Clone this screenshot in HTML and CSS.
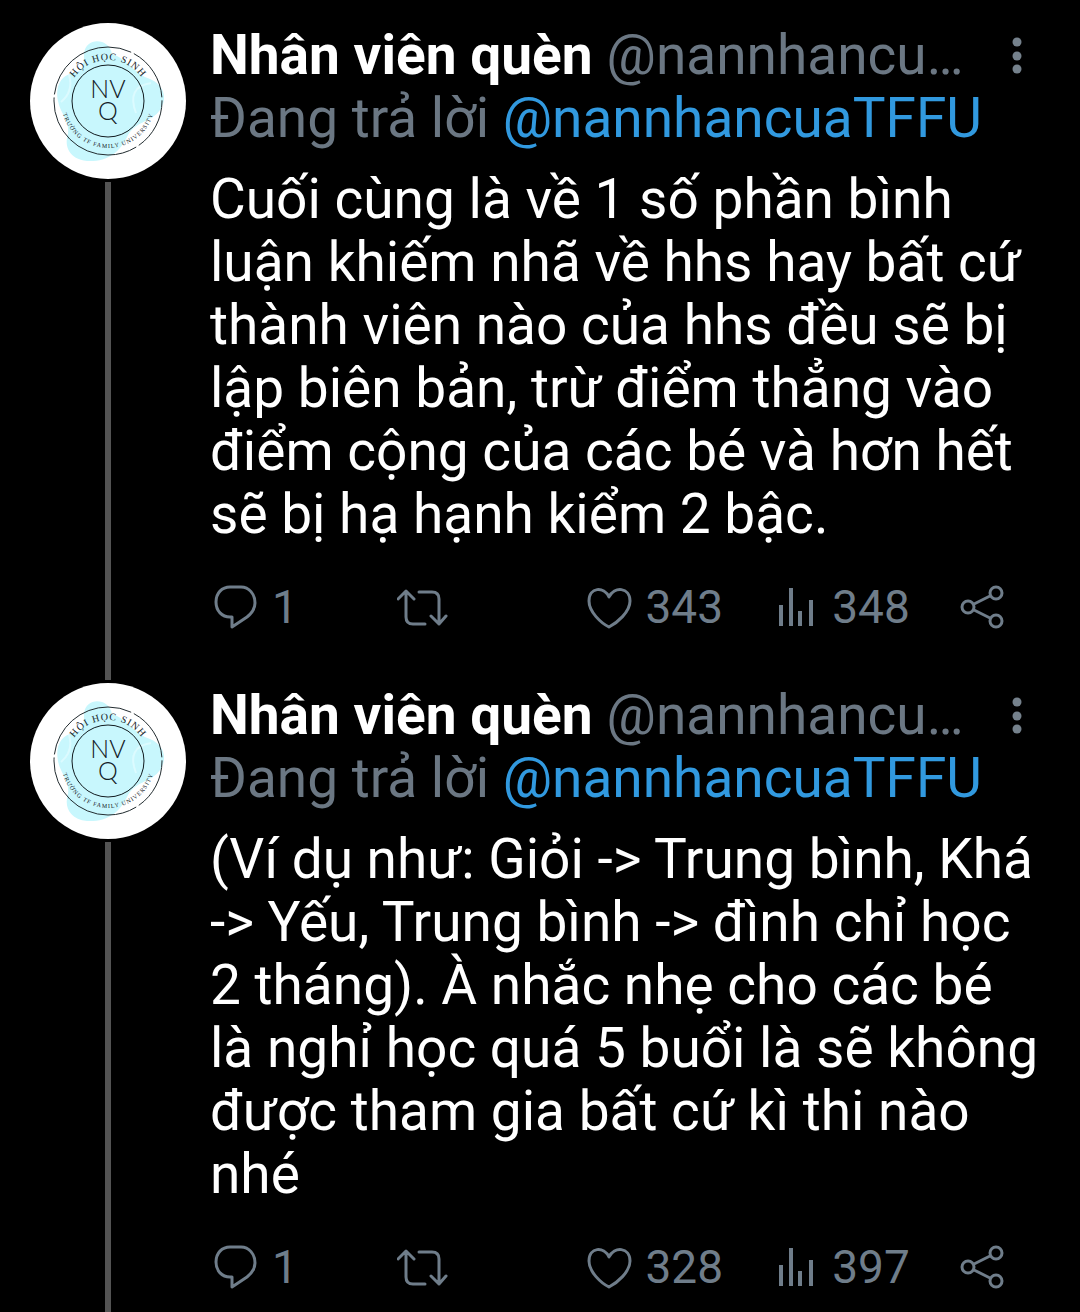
FILE: index.html
```html
<!DOCTYPE html>
<html lang="vi">
<head>
<meta charset="utf-8">
<meta name="viewport" content="width=device-width, initial-scale=1">
<title>Nhân viên quèn</title>
<link rel="stylesheet" href="styles.css">
</head>
<body>
<svg class="defs" aria-hidden="true">
  <symbol id="avatar" viewBox="0 0 156 156">
    <circle cx="78" cy="78" r="78" fill="#fff"/>
    <path d="M54 31C55 14 79 14 82 31C98 36 104 51 120 56C134 62 138 75 130 87C122 99 106 98 98 112C90 130 77 139 57 138C39 136 34 123 38 111C40 98 30 90 28 78C25 63 31 52 44 50C53 48 54 42 54 31Z" fill="#c8f7fd"/>
    <path d="M31 79Q44 68 39 52M106 90Q96 64 121 60" fill="none" stroke="#dcfbff" stroke-width="2"/>
    <circle cx="78" cy="78" r="54" fill="none" stroke="#222c30" stroke-width="1" stroke-dasharray="52 3 118 3 102 3 54 3"/>
    <circle cx="78" cy="78" r="36" fill="none" stroke="#111b1f" stroke-width="1"/>
    <path id="arc-top" d="M37 78A41 41 0 0 1 119 78" fill="none"/>
    <path id="arc-bottom" d="M31 78A47 47 0 0 0 125 78" fill="none"/>
    <g class="seal" text-anchor="middle">
      <text font-size="10" letter-spacing="1"><textPath href="#arc-top" startOffset="50%">HỘI HỌC SINH</textPath></text>
      <text font-size="6" letter-spacing="1"><textPath href="#arc-bottom" startOffset="50%">TRƯỜNG TF FAMILY UNIVERSITY</textPath></text>
      <text class="monogram" x="78" y="75" font-size="25">NV</text>
      <text class="monogram" x="78" y="97" font-size="25">Q</text>
    </g>
  </symbol>
  <symbol id="more" viewBox="0 0 46 48"><g fill="#75818c"><circle cx="23" cy="10" r="4.500"/><circle cx="23" cy="24" r="4.500"/><circle cx="23" cy="37" r="4.500"/></g></symbol>
  <symbol id="reply" viewBox="0 0 52 48"><path d="M20 4H31C39 4 45 11 45 20C45 26 42 30 37 34L22 44V34H20C12 34 6 28 6 19S12 4 20 4Z"/></symbol>
  <symbol id="retweet" viewBox="0 0 52 48"><path d="M1 16L9 8L17 16M9 8V34Q9 41 16 41H28M22 9H35Q42 9 42 16V41M34 33L42 41L49 33"/></symbol>
  <symbol id="like" viewBox="0 0 52 48"><path d="M25 14C20 3 5 4 5 18C5 29 17 40 25 44C33 40 46 29 46 18C46 4 30 3 25 14Z"/></symbol>
  <symbol id="views" viewBox="0 0 52 48"><path class="bar" d="M11 22V43M21 5V43M30 28V43M41 17V43"/></symbol>
  <symbol id="share" viewBox="0 0 52 48"><circle cx="11" cy="24" r="6"/><circle cx="39" cy="10" r="6"/><circle cx="39" cy="38" r="6"/><path d="M17 21L33 13M17 27L33 35"/></symbol>
</svg>
<main class="thread">
  <article class="tweet">
    <div class="rail">
      <svg class="avatar" role="img" aria-label="Hội học sinh"><use href="#avatar"/></svg>
    </div>
    <div class="content">
      <header class="head">
        <span class="name">Nhân viên quèn</span>
        <span class="handle">@nannhancuaTFFU</span>
        <button class="more" aria-label="Thêm"><svg><use href="#more"/></svg></button>
      </header>
      <p class="replying">Đang trả lời <a href="#">@nannhancuaTFFU</a></p>
      <p class="text">Cuối cùng là về 1 số phần bình luận khiếm nhã về hhs hay bất cứ thành viên nào của hhs đều sẽ bị lập biên bản, trừ điểm thẳng vào điểm cộng của các bé và hơn hết sẽ bị hạ hạnh kiểm 2 bậc.</p>
      <div class="actions">
        <button class="action" aria-label="Trả lời"><svg><use href="#reply"/></svg><span>1</span></button>
        <button class="action" aria-label="Tweet lại"><svg><use href="#retweet"/></svg></button>
        <button class="action" aria-label="Thích"><svg><use href="#like"/></svg><span>343</span></button>
        <button class="action" aria-label="Lượt xem"><svg><use href="#views"/></svg><span>348</span></button>
        <button class="action" aria-label="Chia sẻ"><svg><use href="#share"/></svg></button>
      </div>
    </div>
  </article>
  <article class="tweet">
    <div class="rail">
      <svg class="avatar" role="img" aria-label="Hội học sinh"><use href="#avatar"/></svg>
    </div>
    <div class="content">
      <header class="head">
        <span class="name">Nhân viên quèn</span>
        <span class="handle">@nannhancuaTFFU</span>
        <button class="more" aria-label="Thêm"><svg><use href="#more"/></svg></button>
      </header>
      <p class="replying">Đang trả lời <a href="#">@nannhancuaTFFU</a></p>
      <p class="text">(Ví dụ như: Giỏi -&gt; Trung bình, Khá -&gt; Yếu, Trung bình -&gt; đình chỉ học 2 tháng). À nhắc nhẹ cho các bé là nghỉ học quá 5 buổi là sẽ không được tham gia bất cứ kì thi nào nhé</p>
      <div class="actions">
        <button class="action" aria-label="Trả lời"><svg><use href="#reply"/></svg><span>1</span></button>
        <button class="action" aria-label="Tweet lại"><svg><use href="#retweet"/></svg></button>
        <button class="action" aria-label="Thích"><svg><use href="#like"/></svg><span>328</span></button>
        <button class="action" aria-label="Lượt xem"><svg><use href="#views"/></svg><span>397</span></button>
        <button class="action" aria-label="Chia sẻ"><svg><use href="#share"/></svg></button>
      </div>
    </div>
  </article>
</main>
</body>
</html>
```
FILE: styles.css
```css
* { box-sizing: border-box; }
body {
  margin: 0;
  background: #000;
  color: #fff;
  font: 400 55px/63px Roboto, sans-serif;
}
p { margin: 0; }
a { color: #3199df; text-decoration: none; }
button {
  padding: 0;
  border: 0;
  background: none;
  color: inherit;
  font: inherit;
  cursor: pointer;
}
.defs { position: absolute; width: 0; height: 0; }
.thread { padding: 23px 40px 0 30px; }
.tweet { display: flex; gap: 24px; }
.rail {
  display: flex;
  flex: none;
  flex-direction: column;
  align-items: center;
  gap: 3px;
  width: 156px;
  padding-bottom: 3px;
}
.rail::after {
  content: "";
  flex: 1;
  width: 6px;
  background: #535353;
}
.avatar { display: block; width: 156px; height: 156px; }
.seal { fill: #142126; font-family: "Liberation Serif", serif; }
.monogram { font-family: Lato, sans-serif; font-weight: 300; }
.content { flex: 1; min-width: 0; padding: 1px 0 52px; }
.tweet:last-child .rail { padding-bottom: 0; }
.tweet:last-child .content { padding-bottom: 21px; }
.head { display: flex; align-items: center; gap: 14px; }
.name { flex: none; font-weight: 700; }
.handle {
  flex: 1;
  overflow: hidden;
  color: #6b7783;
  text-overflow: ellipsis;
  white-space: nowrap;
}
.more { flex: none; width: 46px; height: 48px; }
.more svg { display: block; width: 46px; height: 48px; }
.replying { color: #6b7783; }
.text { margin-top: 18px; }
.actions {
  display: grid;
  grid-template-columns: repeat(4, 1fr) 52px;
  margin: 37px 31px 0 0;
  color: #6f7d8a;
  font-size: 46px;
  line-height: 48px;
}
.action { display: flex; align-items: center; gap: 10px; }
.action svg {
  flex: none;
  width: 52px;
  height: 48px;
  fill: none;
  stroke: currentColor;
  stroke-width: 3;
  stroke-linecap: round;
  stroke-linejoin: round;
}
.bar { stroke-width: 4; stroke-linecap: butt; }
```
